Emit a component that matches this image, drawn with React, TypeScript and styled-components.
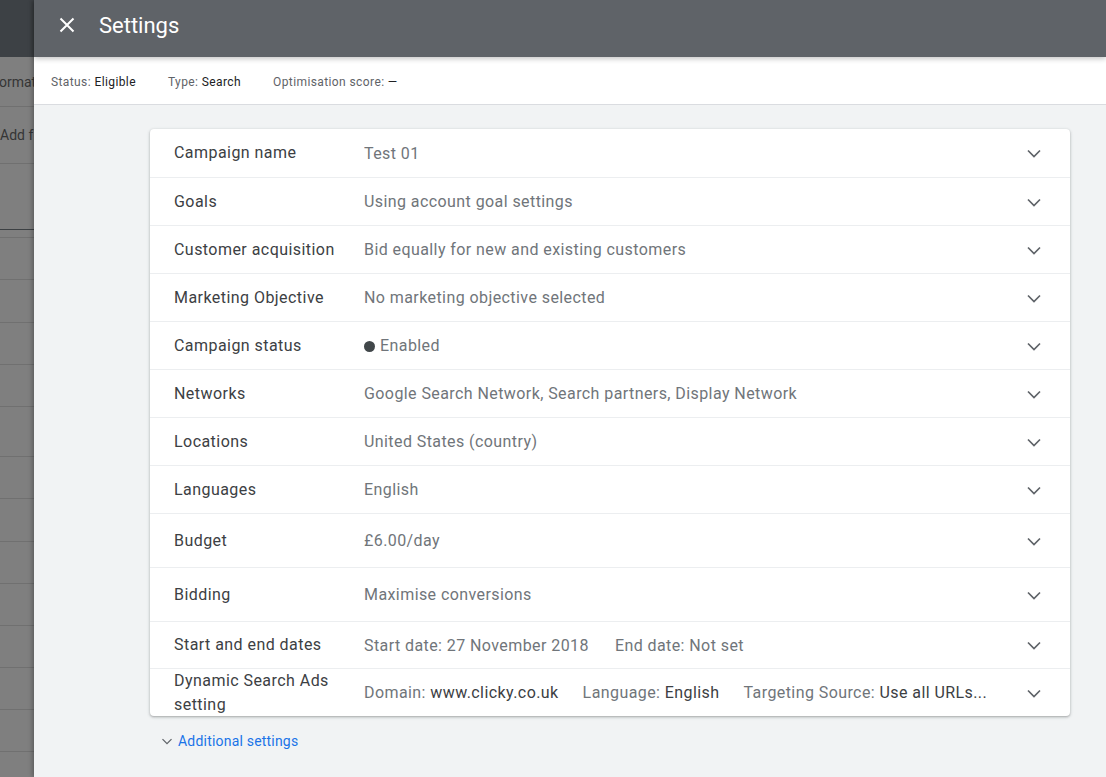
import React from "react";
import styled, { createGlobalStyle } from "styled-components";

const GlobalStyle = createGlobalStyle`
  html, body { margin: 0; padding: 0; }
  body {
    font-family: Roboto, "Liberation Sans", Arial, sans-serif;
    background: #f1f3f4;
    overflow: hidden;
  }
`;

const Page = styled.div`
  display: flex;
  height: 777px;
  width: 100%;
  overflow: hidden;
`;

/* ---------- dimmed page behind the drawer ---------- */
const Backdrop = styled.aside`
  width: 34px;
  flex: none;
  background: #7f7f7f;
  display: flex;
  flex-direction: column;
  overflow: hidden;
`;

const BackdropBar = styled.div`
  height: 57px;
  flex: none;
  background: #3d4145;
`;

const BackdropRow = styled.div<{ $h: number; $line?: string }>`
  height: ${(p) => p.$h}px;
  flex: none;
  border-bottom: 1px solid ${(p) => p.$line || "#707070"};
  display: flex;
  align-items: center;
  font-size: 14px;
  color: #353535;
  white-space: nowrap;
  overflow: hidden;
`;

const BackdropText = styled.span<{ $shift: number }>`
  margin-left: ${(p) => p.$shift}px;
`;

/* ---------- drawer ---------- */
const Drawer = styled.main`
  flex: 1;
  display: flex;
  flex-direction: column;
  background: #f1f3f4;
  box-shadow: -2px 0 4px rgba(0, 0, 0, 0.25);
  position: relative;
  z-index: 1;
`;

const Header = styled.header`
  height: 57px;
  box-sizing: border-box;
  flex: none;
  background: #5f6368;
  display: flex;
  align-items: center;
  padding: 0 0 7px 21px;
  box-shadow: 0 2px 5px rgba(0, 0, 0, 0.22);
  position: relative;
  z-index: 2;
`;

const CloseButton = styled.button`
  width: 24px;
  height: 24px;
  padding: 0;
  border: 0;
  background: none;
  display: flex;
  align-items: center;
  justify-content: center;
  cursor: pointer;
`;

const Title = styled.h1`
  margin: 0 0 0 20px;
  font-size: 22px;
  font-weight: 400;
  color: #ffffff;
`;

const StatusBar = styled.div`
  height: 48px;
  box-sizing: border-box;
  flex: none;
  background: #ffffff;
  border-bottom: 1px solid #dadce0;
  display: flex;
  align-items: center;
  padding: 3px 0 0 17px;
  gap: 32px;
  font-size: 12px;
  letter-spacing: 0.4px;
`;

const StatusItem = styled.span`
  color: #5f6368;
`;

const StatusValue = styled.span`
  color: #202124;
`;

const Content = styled.div`
  flex: 1;
  padding: 24px 36px 0 116px;
`;

const Card = styled.section`
  background: #ffffff;
  border-radius: 4px;
  box-shadow: 0 1px 2px rgba(60, 64, 67, 0.3), 0 1px 3px 1px rgba(60, 64, 67, 0.12);
  display: flex;
  flex-direction: column;
`;

const Row = styled.div<{ $h: number }>`
  height: ${(p) => p.$h}px;
  box-sizing: border-box;
  display: flex;
  align-items: center;
  padding: 0 24px;
  border-top: 1px solid #eceef0;
  &:first-child {
    border-top: 0;
  }
`;

const Label = styled.div`
  width: 190px;
  flex: none;
  padding-right: 18px;
  box-sizing: border-box;
  font-size: 16px;
  line-height: 24px;
  letter-spacing: 0.45px;
  color: #3c4043;
`;

const Value = styled.div<{ $gap: number }>`
  flex: 1;
  display: flex;
  align-items: center;
  gap: ${(p) => p.$gap}px;
  font-size: 16px;
  letter-spacing: 0.42px;
  color: #70757a;
  white-space: nowrap;
  overflow: hidden;
`;

const Part = styled.span``;

const Strong = styled.span`
  color: #3c4043;
`;

const Dot = styled.span`
  width: 11px;
  height: 11px;
  border-radius: 50%;
  background: #41474a;
  display: inline-block;
  margin-right: 5px;
  vertical-align: -1px;
`;

const Chevron = styled.span`
  width: 24px;
  height: 24px;
  flex: none;
  display: flex;
  align-items: center;
  justify-content: center;
`;

const MoreLink = styled.a`
  display: flex;
  align-items: center;
  gap: 2px;
  margin: 16px 0 0 8px;
  font-size: 14px;
  letter-spacing: 0.2px;
  color: #1a73e8;
  text-decoration: none;
  cursor: pointer;
`;

const ExpandIcon = ({ color = "#5f6368", size = 24 }: { color?: string; size?: number }) => (
  <svg width={size} height={size} viewBox="0 0 24 24">
    <path d="M6 9.5l6 6 6-6" fill="none" stroke={color} strokeWidth="1.7" />
  </svg>
);

const CloseIcon = () => (
  <svg width="24" height="24" viewBox="0 0 24 24">
    <path d="M5.5 5.5l13 13M18.5 5.5l-13 13" stroke="#ffffff" strokeWidth="2" fill="none" />
  </svg>
);

type Setting = { label: string; h: number; gap?: number; value: React.ReactNode };

const settings: Setting[] = [
  { label: "Campaign name", h: 48, value: <Part>Test 01</Part> },
  { label: "Goals", h: 48, value: <Part>Using account goal settings</Part> },
  { label: "Customer acquisition", h: 48, value: <Part>Bid equally for new and existing customers</Part> },
  { label: "Marketing Objective", h: 48, value: <Part>No marketing objective selected</Part> },
  {
    label: "Campaign status",
    h: 48,
    value: (
      <Part>
        <Dot />
        Enabled
      </Part>
    ),
  },
  { label: "Networks", h: 48, value: <Part>Google Search Network, Search partners, Display Network</Part> },
  { label: "Locations", h: 48, value: <Part>United States (country)</Part> },
  { label: "Languages", h: 48, value: <Part>English</Part> },
  { label: "Budget", h: 54, value: <Part>£6.00/day</Part> },
  { label: "Bidding", h: 54, value: <Part>Maximise conversions</Part> },
  {
    label: "Start and end dates",
    h: 47,
    gap: 26,
    value: (
      <>
        <Part>Start date: 27 November 2018</Part>
        <Part>End date: Not set</Part>
      </>
    ),
  },
  {
    label: "Dynamic Search Ads setting",
    h: 48,
    gap: 24,
    value: (
      <>
        <Part>
          Domain: <Strong>www.clicky.co.uk</Strong>
        </Part>
        <Part>
          Language: <Strong>English</Strong>
        </Part>
        <Part>
          Targeting Source: <Strong>Use all URLs...</Strong>
        </Part>
      </>
    ),
  },
];

const backdropRows = [
  { h: 49, text: "ormat", shift: -1 },
  { h: 56, text: "Add f", shift: 0 },
  { h: 65, text: "", shift: 0, line: "#3c4043" },
  { h: 7 },
  { h: 41 },
  { h: 42 },
  { h: 41 },
  { h: 41 },
  { h: 49 },
  { h: 41 },
  { h: 42 },
  { h: 41 },
  { h: 41 },
  { h: 41 },
  { h: 41 },
  { h: 41 },
];

export default function App() {
  return (
    <>
      <GlobalStyle />
      <Page>
        <Backdrop>
          <BackdropBar />
          {backdropRows.map((r, i) => (
            <BackdropRow key={i} $h={r.h} $line={r.line}>
              {r.text ? <BackdropText $shift={r.shift ?? 0}>{r.text}</BackdropText> : null}
            </BackdropRow>
          ))}
        </Backdrop>
        <Drawer>
          <Header>
            <CloseButton aria-label="Close">
              <CloseIcon />
            </CloseButton>
            <Title>Settings</Title>
          </Header>
          <StatusBar>
            <StatusItem>
              Status: <StatusValue>Eligible</StatusValue>
            </StatusItem>
            <StatusItem>
              Type: <StatusValue>Search</StatusValue>
            </StatusItem>
            <StatusItem>
              Optimisation score: <StatusValue>—</StatusValue>
            </StatusItem>
          </StatusBar>
          <Content>
            <Card>
              {settings.map((s) => (
                <Row key={s.label} $h={s.h}>
                  <Label>{s.label}</Label>
                  <Value $gap={s.gap ?? 28}>{s.value}</Value>
                  <Chevron>
                    <ExpandIcon />
                  </Chevron>
                </Row>
              ))}
            </Card>
            <MoreLink>
              <ExpandIcon size={18} />
              Additional settings
            </MoreLink>
          </Content>
        </Drawer>
      </Page>
    </>
  );
}
